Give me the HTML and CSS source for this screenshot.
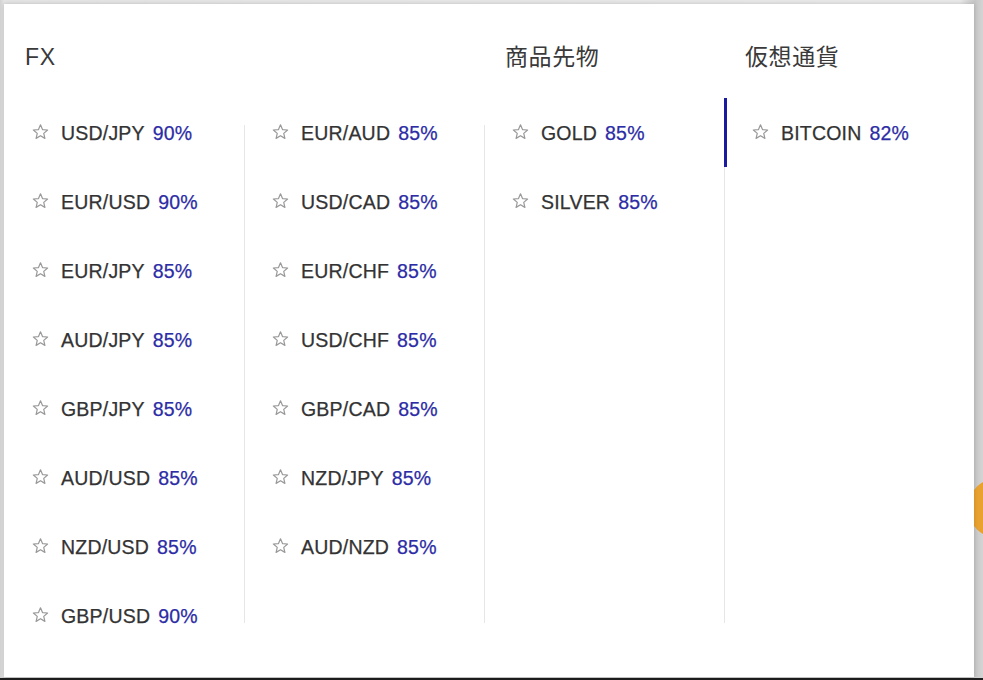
FILE: index.html
```html
<!DOCTYPE html>
<html lang="ja">
<head>
<meta charset="utf-8">
<title>Assets</title>
<link rel="stylesheet" href="styles.css">
</head>
<body>
<div class="page">
  <div class="blob"></div>
  <div class="panel">
    <section class="col">
      <h2 class="head">FX</h2>
      <ul class="list">
        <li class="item"><svg class="star" viewBox="0 0 16 16"><polygon points="8,0.8 10,5.55 15.13,5.98 11.23,9.35 12.41,14.37 8,11.7 3.59,14.37 4.77,9.35 0.87,5.98 6,5.55"/></svg><span class="name">USD/JPY</span><span class="pct">90%</span></li>
        <li class="item"><svg class="star" viewBox="0 0 16 16"><polygon points="8,0.8 10,5.55 15.13,5.98 11.23,9.35 12.41,14.37 8,11.7 3.59,14.37 4.77,9.35 0.87,5.98 6,5.55"/></svg><span class="name">EUR/USD</span><span class="pct">90%</span></li>
        <li class="item"><svg class="star" viewBox="0 0 16 16"><polygon points="8,0.8 10,5.55 15.13,5.98 11.23,9.35 12.41,14.37 8,11.7 3.59,14.37 4.77,9.35 0.87,5.98 6,5.55"/></svg><span class="name">EUR/JPY</span><span class="pct">85%</span></li>
        <li class="item"><svg class="star" viewBox="0 0 16 16"><polygon points="8,0.8 10,5.55 15.13,5.98 11.23,9.35 12.41,14.37 8,11.7 3.59,14.37 4.77,9.35 0.87,5.98 6,5.55"/></svg><span class="name">AUD/JPY</span><span class="pct">85%</span></li>
        <li class="item"><svg class="star" viewBox="0 0 16 16"><polygon points="8,0.8 10,5.55 15.13,5.98 11.23,9.35 12.41,14.37 8,11.7 3.59,14.37 4.77,9.35 0.87,5.98 6,5.55"/></svg><span class="name">GBP/JPY</span><span class="pct">85%</span></li>
        <li class="item"><svg class="star" viewBox="0 0 16 16"><polygon points="8,0.8 10,5.55 15.13,5.98 11.23,9.35 12.41,14.37 8,11.7 3.59,14.37 4.77,9.35 0.87,5.98 6,5.55"/></svg><span class="name">AUD/USD</span><span class="pct">85%</span></li>
        <li class="item"><svg class="star" viewBox="0 0 16 16"><polygon points="8,0.8 10,5.55 15.13,5.98 11.23,9.35 12.41,14.37 8,11.7 3.59,14.37 4.77,9.35 0.87,5.98 6,5.55"/></svg><span class="name">NZD/USD</span><span class="pct">85%</span></li>
        <li class="item"><svg class="star" viewBox="0 0 16 16"><polygon points="8,0.8 10,5.55 15.13,5.98 11.23,9.35 12.41,14.37 8,11.7 3.59,14.37 4.77,9.35 0.87,5.98 6,5.55"/></svg><span class="name">GBP/USD</span><span class="pct">90%</span></li>
      </ul>
    </section>
    <section class="col">
      <h2 class="head">&nbsp;</h2>
      <ul class="list divided">
        <li class="item"><svg class="star" viewBox="0 0 16 16"><polygon points="8,0.8 10,5.55 15.13,5.98 11.23,9.35 12.41,14.37 8,11.7 3.59,14.37 4.77,9.35 0.87,5.98 6,5.55"/></svg><span class="name">EUR/AUD</span><span class="pct">85%</span></li>
        <li class="item"><svg class="star" viewBox="0 0 16 16"><polygon points="8,0.8 10,5.55 15.13,5.98 11.23,9.35 12.41,14.37 8,11.7 3.59,14.37 4.77,9.35 0.87,5.98 6,5.55"/></svg><span class="name">USD/CAD</span><span class="pct">85%</span></li>
        <li class="item"><svg class="star" viewBox="0 0 16 16"><polygon points="8,0.8 10,5.55 15.13,5.98 11.23,9.35 12.41,14.37 8,11.7 3.59,14.37 4.77,9.35 0.87,5.98 6,5.55"/></svg><span class="name">EUR/CHF</span><span class="pct">85%</span></li>
        <li class="item"><svg class="star" viewBox="0 0 16 16"><polygon points="8,0.8 10,5.55 15.13,5.98 11.23,9.35 12.41,14.37 8,11.7 3.59,14.37 4.77,9.35 0.87,5.98 6,5.55"/></svg><span class="name">USD/CHF</span><span class="pct">85%</span></li>
        <li class="item"><svg class="star" viewBox="0 0 16 16"><polygon points="8,0.8 10,5.55 15.13,5.98 11.23,9.35 12.41,14.37 8,11.7 3.59,14.37 4.77,9.35 0.87,5.98 6,5.55"/></svg><span class="name">GBP/CAD</span><span class="pct">85%</span></li>
        <li class="item"><svg class="star" viewBox="0 0 16 16"><polygon points="8,0.8 10,5.55 15.13,5.98 11.23,9.35 12.41,14.37 8,11.7 3.59,14.37 4.77,9.35 0.87,5.98 6,5.55"/></svg><span class="name">NZD/JPY</span><span class="pct">85%</span></li>
        <li class="item"><svg class="star" viewBox="0 0 16 16"><polygon points="8,0.8 10,5.55 15.13,5.98 11.23,9.35 12.41,14.37 8,11.7 3.59,14.37 4.77,9.35 0.87,5.98 6,5.55"/></svg><span class="name">AUD/NZD</span><span class="pct">85%</span></li>
      </ul>
    </section>
    <section class="col">
      <h2 class="head">商品先物</h2>
      <ul class="list divided">
        <li class="item"><svg class="star" viewBox="0 0 16 16"><polygon points="8,0.8 10,5.55 15.13,5.98 11.23,9.35 12.41,14.37 8,11.7 3.59,14.37 4.77,9.35 0.87,5.98 6,5.55"/></svg><span class="name">GOLD</span><span class="pct">85%</span></li>
        <li class="item"><svg class="star" viewBox="0 0 16 16"><polygon points="8,0.8 10,5.55 15.13,5.98 11.23,9.35 12.41,14.37 8,11.7 3.59,14.37 4.77,9.35 0.87,5.98 6,5.55"/></svg><span class="name">SILVER</span><span class="pct">85%</span></li>
      </ul>
    </section>
    <section class="col">
      <h2 class="head">仮想通貨</h2>
      <ul class="list divided">
        <li class="item active"><svg class="star" viewBox="0 0 16 16"><polygon points="8,0.8 10,5.55 15.13,5.98 11.23,9.35 12.41,14.37 8,11.7 3.59,14.37 4.77,9.35 0.87,5.98 6,5.55"/></svg><span class="name">BITCOIN</span><span class="pct">82%</span></li>
      </ul>
    </section>
  </div>
  <div class="floor"></div>
</div>
</body>
</html>
```

FILE: styles.css
```css
html, body {
  margin: 0;
  padding: 0;
  height: 100%;
  overflow: hidden;
}

body {
  background: #dcdcdc;
  font-family: "Liberation Sans", Arial, "Noto Sans CJK JP", sans-serif;
  color: #333;
}

.page {
  position: relative;
  width: 983px;
  height: 680px;
  padding: 4px 0 0 4px;
  box-sizing: border-box;
  display: flex;
  flex-direction: column;
  background: linear-gradient(to right, #d2d2d2 0, #e4e4e4 4px, #e9e9e9 960px, #c6c6c6 975px, #d4d4d4 983px);
}

.blob {
  position: absolute;
  left: 968px;
  top: 478px;
  width: 60px;
  height: 60px;
  border-radius: 50%;
  background: #e9a22f;
}

.panel {
  position: relative;
  z-index: 1;
  width: 970px;
  height: 673px;
  box-sizing: border-box;
  padding-bottom: 27px;
  background: #fff;
  box-shadow: 0 0 4px rgba(0, 0, 0, 0.18);
  display: flex;
}

.col {
  width: 240px;
  display: flex;
  flex-direction: column;
}

.head {
  margin: 0;
  padding: 39px 0 0 21px;
  height: 28px;
  margin-bottom: 27px;
  font-family: "Liberation Sans", "Noto Sans CJK JP", sans-serif;
  font-size: 23px;
  line-height: 28px;
  font-weight: 400;
  color: #3a3a3a;
  letter-spacing: 0.6px;
}

.list {
  position: relative;
  flex: 1;
  margin: 0;
  padding: 0;
  list-style: none;
}

.list.divided::before {
  content: "";
  position: absolute;
  left: 0;
  top: 27px;
  bottom: 27px;
  width: 1px;
  background: #e6e6e6;
}

.item {
  position: relative;
  z-index: 1;
  height: 69px;
  box-sizing: border-box;
  padding: 2px 0 0 28px;
  display: flex;
  align-items: center;
  font-size: 19.5px;
  letter-spacing: 0.2px;
  -webkit-text-stroke: 0.25px currentColor;
}

.item.active {
  box-shadow: inset 3px 0 0 #1b1ba0;
}

.star {
  width: 17px;
  height: 16px;
  margin-right: 12px;
  margin-top: -4px;
  fill: none;
  stroke: #999;
  stroke-width: 1.2;
  stroke-linejoin: round;
}

.name {
  color: #333;
}

.pct {
  margin-left: 8px;
  color: #2c2ca6;
}

.floor {
  flex: 1;
  margin-left: -4px;
  border-top: 1px solid #d0d0d0;
  background: #1e1e1e;
}
```
